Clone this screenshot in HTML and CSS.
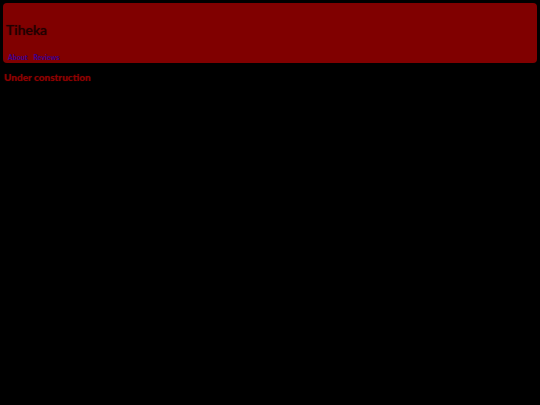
FILE: index.html
```html
<!DOCTYPE html>
<html>
<head>
<meta charset="utf-8">
<link rel="stylesheet" href="styles.css">
</head>
<body>
<header class="header">
  <h1 class="title">Tiheka</h1>
  <nav class="nav"><a class="nav-link" href="#">About</a><a class="nav-link" href="#">Reviews</a></nav>
</header>
<main class="content">
  <p class="notice">Under construction</p>
</main>
</body>
</html>
```
FILE: styles.css
```css
html, body {
  background: #000;
}
body {
  margin: 3px;
  font-family: Lato, sans-serif;
}
.header {
  background: #800000;
  border-radius: 4px;
  height: 60px;
  box-sizing: border-box;
  padding: 18px 3px 0 3px;
  display: flex;
  flex-direction: column;
}
.title {
  margin: 0;
  font-size: 14px;
  font-weight: 500;
  color: #200000;
  line-height: 18px;
  text-shadow: 0 0 1px #300000;
}
.nav {
  margin-top: 13px;
  padding-left: 2px;
  display: flex;
  gap: 6px;
}
.nav-link {
  color: #3a0090;
  font-size: 7px;
  font-weight: 900;
  text-decoration: none;
  line-height: 10px;
}
.content {
  padding: 0 1px;
}
.notice {
  margin: 7px 0 0 0;
  color: #8b0000;
  font-size: 10px;
  font-weight: 900;
  line-height: 14px;
  text-shadow: 0 0 1px #500000;
}
```
